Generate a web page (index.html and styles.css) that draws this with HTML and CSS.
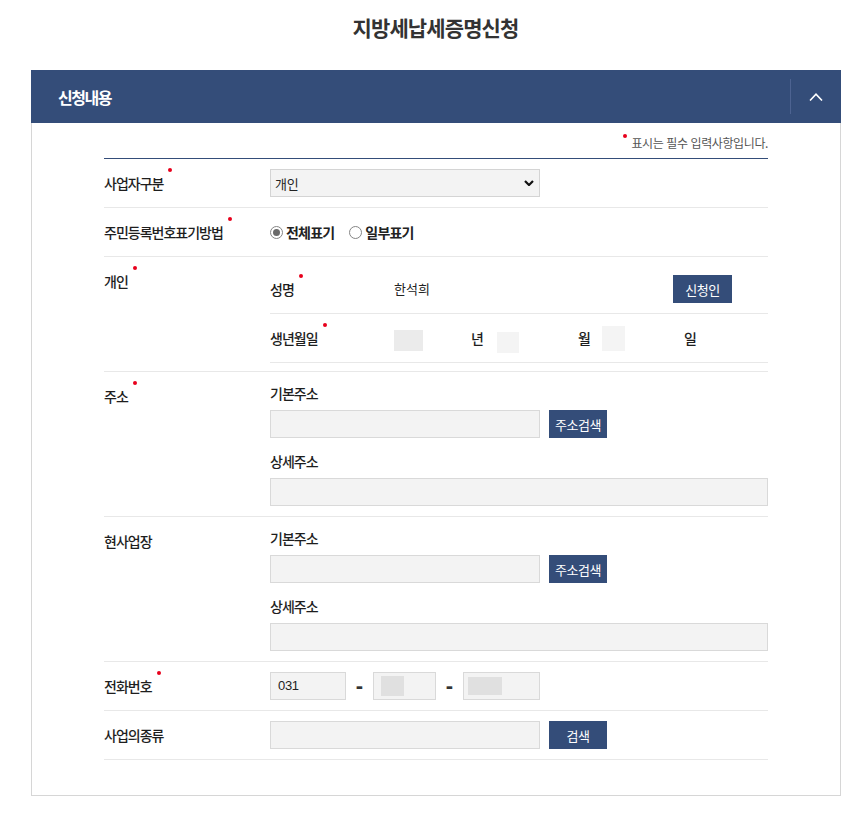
FILE: index.html
```html
<!DOCTYPE html>
<html lang="ko">
<head>
<meta charset="utf-8">
<title>지방세납세증명신청</title>
<link rel="stylesheet" href="styles.css">
</head>
<body>
<h1 class="page-title">지방세납세증명신청</h1>
<section class="panel">
  <div class="panel-head">
    <h2 class="panel-title">신청내용</h2>
    <div class="panel-toggle">
      <svg width="14" height="8" viewBox="0 0 14 8"><path d="M1 7.5 L7 1.2 L13 7.5" fill="none" stroke="#fff" stroke-width="1.6"/></svg>
    </div>
  </div>
  <div class="panel-body">
    <p class="req-note"><span class="note-dot"></span>표시는 필수 입력사항입니다.</p>
    <div class="form">
      <div class="row">
        <div class="label"><span class="req">사업자구분</span></div>
        <div class="field">
          <div class="select"><span>개인</span>
            <svg width="10" height="6" viewBox="0 0 10 6"><path d="M1 1 L5 5 L9 1" fill="none" stroke="#111" stroke-width="2.2"/></svg>
          </div>
        </div>
      </div>
      <div class="row">
        <div class="label"><span class="req">주민등록번호표기방법</span></div>
        <div class="field radios">
          <label class="radio"><span class="radio-circle checked"></span><span class="radio-text">전체표기</span></label>
          <label class="radio"><span class="radio-circle"></span><span class="radio-text">일부표기</span></label>
        </div>
      </div>
      <div class="row">
        <div class="label"><span class="req">개인</span></div>
        <div class="field nested">
          <div class="subrow">
            <div class="sublabel"><span class="req">성명</span></div>
            <div class="value">한석희</div>
            <button class="btn btn-apply">신청인</button>
          </div>
          <div class="subrow">
            <div class="sublabel"><span class="req">생년월일</span></div>
            <div class="birth">
              <span class="mask mask-y"></span><span class="unit unit-y">년</span>
              <span class="mask mask-m"></span><span class="unit unit-m">월</span>
              <span class="mask mask-d"></span><span class="unit">일</span>
            </div>
          </div>
        </div>
      </div>
      <div class="row">
        <div class="label"><span class="req">주소</span></div>
        <div class="field">
          <div class="group">
            <div class="caption">기본주소</div>
            <div class="inline">
              <div class="input w270"></div>
              <button class="btn">주소검색</button>
            </div>
          </div>
          <div class="group">
            <div class="caption">상세주소</div>
            <div class="input full"></div>
          </div>
        </div>
      </div>
      <div class="row">
        <div class="label">현사업장</div>
        <div class="field">
          <div class="group">
            <div class="caption">기본주소</div>
            <div class="inline">
              <div class="input w270"></div>
              <button class="btn">주소검색</button>
            </div>
          </div>
          <div class="group">
            <div class="caption">상세주소</div>
            <div class="input full"></div>
          </div>
        </div>
      </div>
      <div class="row">
        <div class="label"><span class="req">전화번호</span></div>
        <div class="field phone">
          <div class="input tel1">031</div>
          <span class="dash">-</span>
          <div class="input tel2"><span class="tel-mask2"></span></div>
          <span class="dash">-</span>
          <div class="input tel3"><span class="tel-mask3"></span></div>
        </div>
      </div>
      <div class="row">
        <div class="label">사업의종류</div>
        <div class="field">
          <div class="inline">
            <div class="input w270"></div>
            <button class="btn">검색</button>
          </div>
        </div>
      </div>
    </div>
  </div>
</section>
</body>
</html>
```

FILE: styles.css
```css
* { box-sizing: border-box; }
html, body { margin: 0; padding: 0; background: #fff; }
body {
  font-family: "Noto Sans CJK KR", "Noto Sans", sans-serif;
  color: #222;
  font-size: 14px;
}
.page-title {
  margin: 0;
  padding: 14px 0 0 11px;
  height: 70px;
  text-align: center;
  font-size: 21px;
  line-height: 26px;
  font-weight: 700;
  letter-spacing: -0.9px;
  color: #333;
}
.panel {
  margin-left: 31px;
  width: 810px;
}
.panel-head {
  height: 53px;
  background: #344d79;
  display: flex;
  align-items: center;
  justify-content: space-between;
}
.panel-title {
  margin: 0 0 0 27px;
  color: #fff;
  font-size: 16px;
  font-weight: 700;
  letter-spacing: -1.5px;
  line-height: 20px;
}
.panel-toggle {
  width: 51px;
  height: 35px;
  border-left: 1px solid #4d6391;
  display: flex;
  align-items: center;
  justify-content: center;
}
.panel-body {
  border: 1px solid #d6d6d6;
  border-top: 0;
  padding: 11px 72px 35px;
}
.req-note {
  margin: 0 0 6px;
  text-align: right;
  font-size: 12px;
  line-height: 18px;
  letter-spacing: -0.4px;
  color: #555;
}
.note-dot {
  display: inline-block;
  width: 4px;
  height: 4px;
  border-radius: 50%;
  background: #e8001c;
  vertical-align: top;
  margin: 0 4px 0 0;
}
.form { border-top: 1px solid #344d79; }
.row {
  display: flex;
  padding: 10px 0;
  border-bottom: 1px solid #e8e8e8;
}
.label {
  width: 166px;
  flex-shrink: 0;
  line-height: 28px;
  font-size: 14px;
  font-weight: 500;
  letter-spacing: -1px;
  color: #1e1e1e;
}
.req::after {
  content: "";
  display: inline-block;
  width: 4px;
  height: 4px;
  border-radius: 50%;
  background: #e8001c;
  vertical-align: top;
  margin-left: 5px;
  position: relative;
  top: -1px;
}
.field { flex: 1; min-width: 0; }
.select {
  width: 270px;
  height: 28px;
  background: #f3f3f3;
  border: 1px solid #d4d4d4;
  display: flex;
  align-items: center;
  justify-content: space-between;
  padding: 0 5px 0 4px;
  font-size: 13px;
  letter-spacing: -0.3px;
  color: #222;
}
.radios {
  display: flex;
  align-items: center;
  gap: 15px;
}
.radio {
  display: flex;
  align-items: center;
  gap: 3px;
}
.radio-circle {
  width: 13px;
  height: 13px;
  border-radius: 50%;
  border: 1px solid #858585;
  background: #fff;
  display: flex;
  align-items: center;
  justify-content: center;
}
.radio-circle.checked::after {
  content: "";
  width: 7px;
  height: 7px;
  border-radius: 50%;
  background: #6a6a6a;
}
.radio-text {
  font-size: 14px;
  font-weight: 700;
  letter-spacing: -0.8px;
  line-height: 28px;
  color: #222;
}
.nested { margin: -2px 0; }
.subrow {
  display: flex;
  align-items: center;
  padding: 10px 0;
  border-bottom: 1px solid #e8e8e8;
}
.sublabel {
  width: 124px;
  flex-shrink: 0;
  line-height: 28px;
  font-size: 14px;
  font-weight: 500;
  letter-spacing: -1px;
  color: #1e1e1e;
}
.value {
  flex: 1;
  font-size: 13px;
  letter-spacing: 0;
  line-height: 28px;
  color: #222;
}
.btn {
  font-family: inherit;
  height: 28px;
  width: 58px;
  border: 0;
  padding: 0;
  background: #344d79;
  color: #fff;
  font-size: 13px;
  letter-spacing: -0.4px;
  flex-shrink: 0;
}
.btn-apply { width: 59px; margin-right: 36px; }
.birth {
  display: flex;
  align-items: flex-start;
  height: 28px;
}
.mask { display: block; }
.mask-y { width: 29px; height: 21px; background: #ebebeb; margin-top: 6px; margin-right: 48px; }
.mask-m { width: 22px; height: 21px; background: #f4f4f4; margin-top: 8px; margin-right: 59px; }
.mask-d { width: 23px; height: 25px; background: #f4f4f4; margin-top: 2px; margin-right: 59px; }
.unit {
  line-height: 28px;
  font-size: 14px;
  font-weight: 500;
  width: 14px;
  color: #1e1e1e;
}
.unit-y { margin-right: 12px; }
.unit-m { margin-right: 10px; }
.group + .group { margin-top: 12px; }
.caption {
  line-height: 22px;
  font-size: 14px;
  font-weight: 500;
  letter-spacing: -1px;
  margin-bottom: 6px;
  color: #1e1e1e;
}
.inline {
  display: flex;
  align-items: center;
  gap: 9px;
}
.input {
  height: 28px;
  background: #f3f3f3;
  border: 1px solid #d9d9d9;
}
.w270 { width: 270px; }
.full { width: 100%; }
.phone {
  display: flex;
  align-items: center;
}
.tel1 {
  width: 76px;
  padding-left: 7px;
  font-size: 13px;
  line-height: 26px;
  font-family: "Liberation Sans", "Noto Sans CJK KR", sans-serif;
  letter-spacing: -0.3px;
  color: #222;
}
.tel2 { width: 63px; padding: 3px 0 0 7px; }
.tel3 { width: 77px; padding: 4px 0 0 4px; }
.tel-mask2 { display: block; width: 23px; height: 20px; background: #e0e0e0; }
.tel-mask3 { display: block; width: 34px; height: 18px; background: #e0e0e0; }
.dash {
  width: 27px;
  text-align: center;
  font-family: "Liberation Sans", sans-serif;
  font-size: 22px;
  font-weight: 700;
  line-height: 28px;
  color: #333;
}
```
